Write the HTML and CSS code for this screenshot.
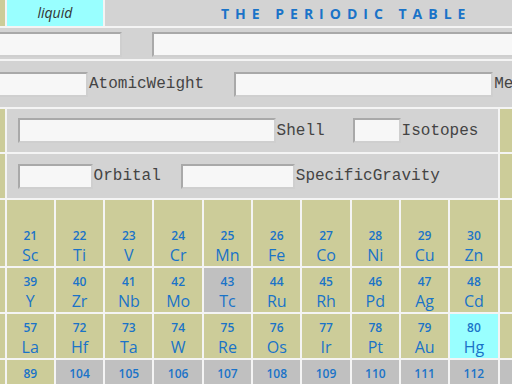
FILE: index.html
```html
<!DOCTYPE html>
<html lang="en">
<head>
    <meta charset="UTF-8">
    <title>The Periodic Table</title>
    <link rel="stylesheet" href="styles.css">
</head>
<body>
    <div class="table">
        <!-- legend + title -->
        <div class="legend solid">solid</div>
        <div class="legend liquid">liquid</div>
        <div class="title">THE PERIODIC TABLE</div>
        <div class="legend gas">gas</div>
        <div class="legend synth">synthetic</div>

        <!-- element detail form -->
        <div class="form-row row-a">
            <input class="f-name" type="text">
            <input class="f-desc" type="text">
        </div>
        <div class="form-row row-b">
            <input class="f-number" type="text"><label>AtomicWeight</label>
            <input class="f-weight" type="text"><label>MeltingPoint</label>
        </div>

        <!-- period 2 -->
        <div class="el solid"><span class="num">3</span><span class="sym">Li</span></div>
        <div class="el solid"><span class="num">4</span><span class="sym">Be</span></div>
        <div class="panel">
            <input class="f-config" type="text"><label class="lbl-shell">Shell</label>
            <input class="f-iso" type="text"><label>Isotopes</label>
        </div>
        <div class="el solid"><span class="num">5</span><span class="sym">B</span></div>
        <div class="el solid"><span class="num">6</span><span class="sym">C</span></div>
        <div class="el gas"><span class="num">7</span><span class="sym">N</span></div>
        <div class="el gas"><span class="num">8</span><span class="sym">O</span></div>
        <div class="el gas"><span class="num">9</span><span class="sym">F</span></div>
        <div class="el gas"><span class="num">10</span><span class="sym">Ne</span></div>

        <!-- period 3 -->
        <div class="el solid"><span class="num">11</span><span class="sym">Na</span></div>
        <div class="el solid"><span class="num">12</span><span class="sym">Mg</span></div>
        <div class="panel">
            <input class="f-shell" type="text"><label class="lbl-orb">Orbital</label>
            <input class="f-orb" type="text"><label>SpecificGravity</label>
        </div>
        <div class="el solid"><span class="num">13</span><span class="sym">Al</span></div>
        <div class="el solid"><span class="num">14</span><span class="sym">Si</span></div>
        <div class="el solid"><span class="num">15</span><span class="sym">P</span></div>
        <div class="el solid"><span class="num">16</span><span class="sym">S</span></div>
        <div class="el gas"><span class="num">17</span><span class="sym">Cl</span></div>
        <div class="el gas"><span class="num">18</span><span class="sym">Ar</span></div>

        <!-- period 4 -->
        <div class="el solid"><span class="num">19</span><span class="sym">K</span></div>
        <div class="el solid"><span class="num">20</span><span class="sym">Ca</span></div>
        <div class="el solid"><span class="num">21</span><span class="sym">Sc</span></div>
        <div class="el solid"><span class="num">22</span><span class="sym">Ti</span></div>
        <div class="el solid"><span class="num">23</span><span class="sym">V</span></div>
        <div class="el solid"><span class="num">24</span><span class="sym">Cr</span></div>
        <div class="el solid"><span class="num">25</span><span class="sym">Mn</span></div>
        <div class="el solid"><span class="num">26</span><span class="sym">Fe</span></div>
        <div class="el solid"><span class="num">27</span><span class="sym">Co</span></div>
        <div class="el solid"><span class="num">28</span><span class="sym">Ni</span></div>
        <div class="el solid"><span class="num">29</span><span class="sym">Cu</span></div>
        <div class="el solid"><span class="num">30</span><span class="sym">Zn</span></div>
        <div class="el solid"><span class="num">31</span><span class="sym">Ga</span></div>
        <div class="el solid"><span class="num">32</span><span class="sym">Ge</span></div>
        <div class="el solid"><span class="num">33</span><span class="sym">As</span></div>
        <div class="el solid"><span class="num">34</span><span class="sym">Se</span></div>
        <div class="el liquid"><span class="num">35</span><span class="sym">Br</span></div>
        <div class="el gas"><span class="num">36</span><span class="sym">Kr</span></div>

        <!-- period 5 -->
        <div class="el solid"><span class="num">37</span><span class="sym">Rb</span></div>
        <div class="el solid"><span class="num">38</span><span class="sym">Sr</span></div>
        <div class="el solid"><span class="num">39</span><span class="sym">Y</span></div>
        <div class="el solid"><span class="num">40</span><span class="sym">Zr</span></div>
        <div class="el solid"><span class="num">41</span><span class="sym">Nb</span></div>
        <div class="el solid"><span class="num">42</span><span class="sym">Mo</span></div>
        <div class="el synth"><span class="num">43</span><span class="sym">Tc</span></div>
        <div class="el solid"><span class="num">44</span><span class="sym">Ru</span></div>
        <div class="el solid"><span class="num">45</span><span class="sym">Rh</span></div>
        <div class="el solid"><span class="num">46</span><span class="sym">Pd</span></div>
        <div class="el solid"><span class="num">47</span><span class="sym">Ag</span></div>
        <div class="el solid"><span class="num">48</span><span class="sym">Cd</span></div>
        <div class="el solid"><span class="num">49</span><span class="sym">In</span></div>
        <div class="el solid"><span class="num">50</span><span class="sym">Sn</span></div>
        <div class="el solid"><span class="num">51</span><span class="sym">Sb</span></div>
        <div class="el solid"><span class="num">52</span><span class="sym">Te</span></div>
        <div class="el solid"><span class="num">53</span><span class="sym">I</span></div>
        <div class="el gas"><span class="num">54</span><span class="sym">Xe</span></div>

        <!-- period 6 -->
        <div class="el solid"><span class="num">55</span><span class="sym">Cs</span></div>
        <div class="el solid"><span class="num">56</span><span class="sym">Ba</span></div>
        <div class="el solid"><span class="num">57</span><span class="sym">La</span></div>
        <div class="el solid"><span class="num">72</span><span class="sym">Hf</span></div>
        <div class="el solid"><span class="num">73</span><span class="sym">Ta</span></div>
        <div class="el solid"><span class="num">74</span><span class="sym">W</span></div>
        <div class="el solid"><span class="num">75</span><span class="sym">Re</span></div>
        <div class="el solid"><span class="num">76</span><span class="sym">Os</span></div>
        <div class="el solid"><span class="num">77</span><span class="sym">Ir</span></div>
        <div class="el solid"><span class="num">78</span><span class="sym">Pt</span></div>
        <div class="el solid"><span class="num">79</span><span class="sym">Au</span></div>
        <div class="el liquid"><span class="num">80</span><span class="sym">Hg</span></div>
        <div class="el solid"><span class="num">81</span><span class="sym">Tl</span></div>
        <div class="el solid"><span class="num">82</span><span class="sym">Pb</span></div>
        <div class="el solid"><span class="num">83</span><span class="sym">Bi</span></div>
        <div class="el solid"><span class="num">84</span><span class="sym">Po</span></div>
        <div class="el solid"><span class="num">85</span><span class="sym">At</span></div>
        <div class="el gas"><span class="num">86</span><span class="sym">Rn</span></div>

        <!-- period 7 -->
        <div class="el solid"><span class="num">87</span><span class="sym">Fr</span></div>
        <div class="el solid"><span class="num">88</span><span class="sym">Ra</span></div>
        <div class="el solid"><span class="num">89</span><span class="sym">Ac</span></div>
        <div class="el synth"><span class="num">104</span><span class="sym">Rf</span></div>
        <div class="el synth"><span class="num">105</span><span class="sym">Db</span></div>
        <div class="el synth"><span class="num">106</span><span class="sym">Sg</span></div>
        <div class="el synth"><span class="num">107</span><span class="sym">Bh</span></div>
        <div class="el synth"><span class="num">108</span><span class="sym">Hs</span></div>
        <div class="el synth"><span class="num">109</span><span class="sym">Mt</span></div>
        <div class="el synth"><span class="num">110</span><span class="sym">Ds</span></div>
        <div class="el synth"><span class="num">111</span><span class="sym">Rg</span></div>
        <div class="el synth"><span class="num">112</span><span class="sym">Cn</span></div>
        <div class="el synth"><span class="num">113</span><span class="sym">Nh</span></div>
        <div class="el synth"><span class="num">114</span><span class="sym">Fl</span></div>
        <div class="el synth"><span class="num">115</span><span class="sym">Mc</span></div>
        <div class="el synth"><span class="num">116</span><span class="sym">Lv</span></div>
        <div class="el synth"><span class="num">117</span><span class="sym">Ts</span></div>
        <div class="el synth"><span class="num">118</span><span class="sym">Og</span></div>
    </div>
</body>
</html>
```

FILE: styles.css
```css
:root {
    --solid: #cccc99;
    --liquid: #99ffff;
    --gas: #ffcccc;
    --synth: #c0c0c0;
    --panel: #d3d3d3;
    --line: #f4f4f4;
    --blue: #1a73c8;
    --cell: 47.3px;
}
html, body {
    margin: 0;
    padding: 0;
    overflow: hidden;
    background-color: #fff;
}
.table {
    display: grid;
    grid-template-columns: repeat(18, var(--cell));
    grid-template-rows: 26px 31px 46px 43px 44px 66px 44px 44px 44px;
    gap: 2px;
    width: max-content;
    margin-left: -92px;
    background-color: var(--line);
    font-family: 'Open Sans', sans-serif;
}
.legend {
    grid-column: span 2;
    display: flex;
    align-items: center;
    justify-content: center;
    padding-bottom: 2px;
    font-size: 14px;
    font-style: italic;
    color: #333;
}
.legend.solid { background-color: var(--solid); }
.legend.liquid { background-color: var(--liquid); }
.legend.gas { background-color: var(--gas); }
.legend.synth { background-color: var(--synth); }
.title {
    grid-column: span 10;
    display: flex;
    align-items: center;
    justify-content: center;
    padding-right: 9px;
    background-color: var(--panel);
    color: var(--blue);
    font-size: 14px;
    font-weight: 700;
    letter-spacing: 6px;
}

/* form */
.form-row, .panel {
    display: flex;
    align-items: center;
    background-color: var(--panel);
    font-family: 'Liberation Mono', monospace;
    font-size: 16px;
    color: #444;
    white-space: nowrap;
}
.form-row {
    grid-column: 1 / -1;
    padding-left: 14px;
}
.row-a { padding-top: 2px; }
.panel {
    grid-column: span 10;
    padding-left: 11px;
    overflow: hidden;
}
.form-row input, .panel input {
    box-sizing: border-box;
    height: 25px;
    margin: 0;
    padding: 0 4px;
    background-color: #f7f7f7;
    border: 2px solid;
    border-color: #a9a9a9 #cfcfcf #cfcfcf #a9a9a9;
    font: inherit;
    flex: none;
}
.form-row label, .panel label {
    margin: 0 30px 0 1px;
}
.f-name { width: 200px; margin-right: 30px !important; }
.f-desc { width: 420px; }
.f-number { width: 166px; }
.f-weight { width: 259px; }
.f-config { width: 258px; }
.panel .lbl-shell { margin-right: 28px; }
.f-iso { width: 48px; }
.f-shell { width: 75px; }
.panel .lbl-orb { margin-right: 20px; }
.f-orb { width: 114px; }

/* elements */
.el {
    display: flex;
    flex-direction: column;
    justify-content: flex-end;
    align-items: center;
    color: var(--blue);
}
.el.solid { background-color: var(--solid); }
.el.liquid { background-color: var(--liquid); }
.el.gas { background-color: var(--gas); }
.el.synth { background-color: var(--synth); }
.el .num {
    font-size: 12px;
    font-weight: 600;
    line-height: 17px;
}
.el .sym {
    font-size: 16px;
    line-height: 22px;
}
```
